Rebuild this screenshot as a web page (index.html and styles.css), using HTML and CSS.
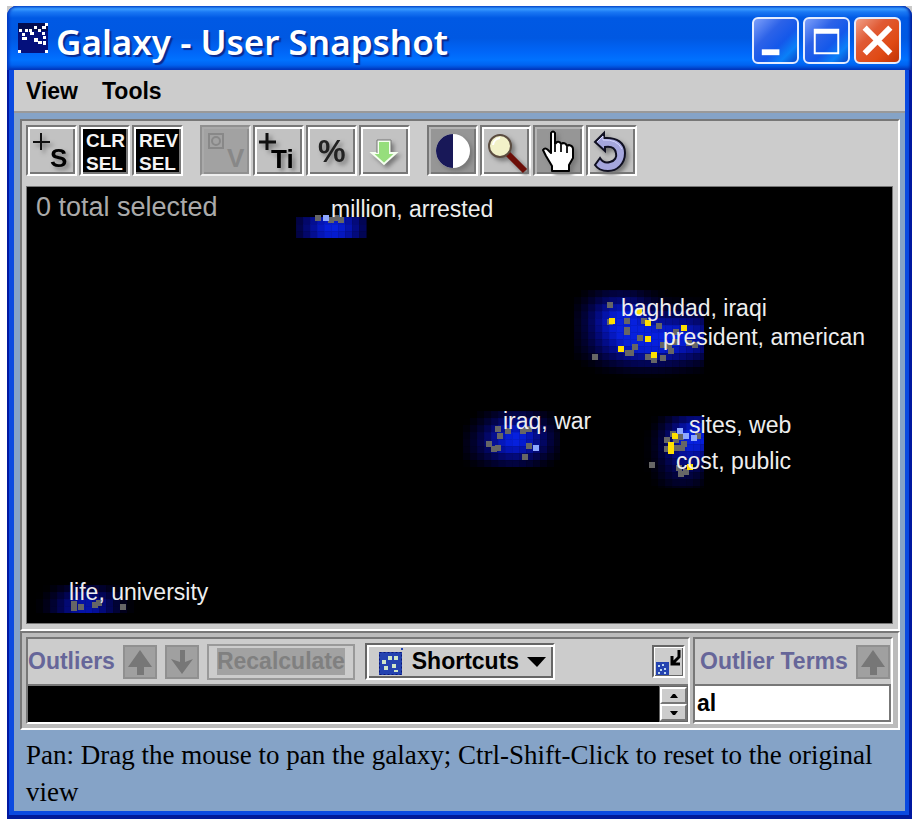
FILE: index.html
```html
<!DOCTYPE html>
<html lang="en">
<head>
<meta charset="utf-8">
<title>Galaxy - User Snapshot</title>
<link rel="stylesheet" href="styles.css">
</head>
<body>
<div class="backdrop">
<main class="window">
  <header class="titlebar">
    <svg class="app-icon" viewBox="0 0 30 30" aria-hidden="true">
      <rect width="30" height="30" fill="#04107c"/>
      <path d="M0 0h30v8H0z" fill="#020c50"/>
      <path d="M1 6h3v3H1zM7 6h3v3H7zM4 10h3v3H4zM11 6h3v3h-3zM4 14h5v3H4zM12 9h4v3h-4zM16 3h3v3h-3zM20 6h3v3h-3zM24 3h4v3h-4zM27 0h3v3h-3zM24 9h3v3h-3zM16 15h4v4h-4zM20 18h4v3h-4zM25 18h3v4h-3zM25 13h3v3h-3zM0 27h3v3H0zM27 27h3v3h-3z" fill="#fff"/>
    </svg>
    <h1 class="title">Galaxy - User Snapshot</h1>
    <div class="caption-buttons">
      <button class="caption" aria-label="Minimize"><svg viewBox="0 0 48 48"><path d="M10 33h18v6H10z" fill="#fff"/></svg></button>
      <button class="caption" aria-label="Maximize"><svg viewBox="0 0 48 48"><path d="M11 12h26v26H11zM13 17v19h22V17z" fill="#fff" fill-rule="evenodd"/></svg></button>
      <button class="caption close" aria-label="Close"><svg viewBox="0 0 48 48"><path d="M13 13l22 22M35 13L13 35" stroke="#fff" stroke-width="6" stroke-linecap="square"/></svg></button>
    </div>
  </header>

  <div class="client">
    <nav class="menubar">
      <button class="menu">View</button>
      <button class="menu">Tools</button>
    </nav>

    <div class="content">
      <section class="galaxy-panel">
        <div class="toolbar">
          <div class="group">
            <button class="tool" aria-label="Add to selection"><svg viewBox="0 0 51 51">
              <g class="shadow"><path d="M7 17h17M15 8v17" stroke="#111" stroke-width="2"/><text x="24" y="42" class="glyph">S</text></g></svg></button>
            <button class="tool solid" aria-label="Clear selection"><svg viewBox="0 0 51 51"><text x="7" y="22" class="caps">CLR</text><text x="7" y="45" class="caps">SEL</text></svg></button>
            <button class="tool solid" aria-label="Reverse selection"><svg viewBox="0 0 51 51"><text x="7" y="22" class="caps">REV</text><text x="7" y="45" class="caps">SEL</text></svg></button>
          </div>
          <div class="group">
            <button class="tool off" disabled aria-label="View"><svg viewBox="0 0 51 51">
              <path d="M9 9h14v14H9z" fill="none" stroke="#888" stroke-width="2"/><circle cx="16" cy="16" r="4" fill="none" stroke="#888" stroke-width="2"/><text x="27" y="42" class="glyph faded">V</text></svg></button>
            <button class="tool" aria-label="Add title"><svg viewBox="0 0 51 51"><g class="shadow"><path d="M6 17h17M14 8v17" stroke="#111" stroke-width="3"/><text x="18" y="43" class="glyph">Ti</text></g></svg></button>
            <button class="tool" aria-label="Percent"><svg viewBox="0 0 51 51"><text x="12" y="37" class="percent shadow">%</text></svg></button>
            <button class="tool" aria-label="Load"><svg viewBox="0 0 51 51"><path class="shadow" d="M19 16h12v12h6L25 39 13 28h6z" fill="#96de7c" stroke="#f5fff0" stroke-width="2"/><path d="M18 28V15h14v12" fill="none" stroke="#777"/></svg></button>
          </div>
          <div class="group">
            <button class="tool down" aria-label="Contrast"><svg viewBox="0 0 51 51"><g class="shadow"><circle cx="26" cy="26" r="17" fill="#fff"/><path d="M26 9a17 17 0 0 0 0 34z" fill="#181858"/></g></svg></button>
            <button class="tool" aria-label="Zoom"><svg viewBox="0 0 51 51"><g class="shadow"><path d="M28 29l17 17" stroke="#6c0e08" stroke-width="6"/><circle cx="20" cy="21" r="11" fill="#f2f1c8" stroke="#5b4c40" stroke-width="2"/><path d="M13 20a8 8 0 0 1 7-7" fill="none" stroke="#fff" stroke-width="2"/></g></svg></button>
            <button class="tool down" aria-label="Pan"><svg viewBox="0 0 51 51"><path class="shadow" d="M18 8q2-3 4 0v11l2-2q3-1 4 2l2-1q3 0 4 3l2-1q4 1 4 4v9l-4 7v6H19v-5l-6-10-3-6q2-3 5 0l3 3z" fill="#fff" stroke="#000" stroke-width="2" stroke-linejoin="round"/><path d="M22 19v8M28 19v8M34 21v7" stroke="#222" stroke-width="2" fill="none"/></svg></button>
            <button class="tool" aria-label="Undo"><svg viewBox="0 0 51 51"><path class="shadow" d="M9 17L18 8v5C31 12 39 18 39 28C39 39 31 46 22 46C16 46 11 43 9 40L14 33C17 38 21 38 24 37C29 36 31 32 30 28C29 23 25 21 19 22v4z" fill="#a5a6dd" stroke="#101022" stroke-width="2"/><path d="M11 17l6-6v4q14-1 19 9" fill="none" stroke="#d4d5ff"/></svg></button>
          </div>
        </div>
        <svg class="galaxy" viewBox="0 0 865 436" role="img" aria-label="Galaxy of document clusters">
          <rect width="865" height="436"/>
          <g id="halos"></g>
          <g id="points"></g>
          <g class="labels">
            <text x="304" y="30">million, arrested</text>
            <text x="594" y="129">baghdad, iraqi</text>
            <text x="636" y="158">president, american</text>
            <text x="476" y="242">iraq, war</text>
            <text x="662" y="246">sites, web</text>
            <text x="649" y="282">cost, public</text>
            <text x="42" y="413">life, university</text>
          </g>
          <text class="count" x="9" y="29">0 total selected</text>
        </svg>
      </section>

      <section class="outliers">
        <div class="pane pane-list">
          <div class="pane-head">
            <span class="caption-text">Outliers</span>
            <button class="arrow" disabled aria-label="Previous outlier"><svg viewBox="0 0 34 34"><path d="M17 5l12 17h-8v8h-7v-8H5z" fill="#777"/></svg></button>
            <button class="arrow" disabled aria-label="Next outlier"><svg viewBox="0 0 34 34"><path d="M15 5h5v12l8-3-11 15L6 14l9 3z" fill="#777"/></svg></button>
            <button class="recalc" disabled><span>Recalculate</span></button>
            <button class="shortcuts">
              <svg class="grid-icon" viewBox="0 0 25 27"><path d="M0 4h23v23H0z" fill="#2443b0"/><path d="M.5 4.500h22v22H.5z" fill="none" stroke="#0a1878" stroke-dasharray="2 2"/><path d="M22 0h2v2h-2z" fill="#2443b0"/><path d="M9 8h4v4H9zM15 8h4v4h-4zM3 12h4v4H3zM13 16h4v4h-4zM5 18h4v4H5zM15 22h4v2h-4z" fill="#cfe6c8"/></svg>
              Shortcuts
              <svg class="chevron" viewBox="0 0 19 10"><path d="M0 0h19l-9 10z"/></svg>
            </button>
            <button class="export" aria-label="Send to galaxy"><svg viewBox="0 0 33 33"><path d="M4 17h13v13H4z" fill="#2443b0"/><path d="M6 20h2v2H6zM10 19h2v2h-2zM8 24h2v2H8zM12 23h2v2h-2zM6 27h2v2H6zM12 27h2v2h-2z" fill="#bcd6f0"/><path d="M27 5v7l-6 6M20 11v8h8" fill="none" stroke="#000" stroke-width="3"/></svg></button>
          </div>
          <div class="list-row">
            <div class="list" role="listbox" aria-label="Outliers"></div>
            <div class="spinner">
              <button aria-label="Scroll up"><svg viewBox="0 0 8 4"><path d="M0 4l3-4h2l3 4z"/></svg></button>
              <button aria-label="Scroll down"><svg viewBox="0 0 8 4"><path d="M0 0l3 4h2l3-4z"/></svg></button>
            </div>
          </div>
        </div>
        <div class="pane pane-terms">
          <div class="pane-head">
            <label class="caption-text" for="terms">Outlier Terms</label>
            <button class="arrow" disabled aria-label="Previous term"><svg viewBox="0 0 34 34"><path d="M17 5l12 17h-8v8h-7v-8H5z" fill="#777"/></svg></button>
          </div>
          <input id="terms" class="terms" type="text" value="al">
        </div>
      </section>

      <p class="status">Pan: Drag the mouse to pan the galaxy; Ctrl-Shift-Click to reset to the original view</p>
    </div>
  </div>
</main>
</div>
<script src="galaxy.js"></script>
</body>
</html>
```
FILE: styles.css
```css
* { box-sizing: border-box; }
body {
  margin: 0;
  padding: 6px 6px 5px 7px;
  background: #fff;
  font-family: "Liberation Sans", Arial, sans-serif;
  color: #000;
}
button { font: inherit; color: inherit; margin: 0; padding: 0; border: 0; border-radius: 0; background: none; }
svg { display: block; }

.backdrop { background: linear-gradient(#c9c9c9 30px, #fff 30px); }
.window {
  padding: 0 7px 8px;
  border-radius: 10px 10px 0 0;
  background: #0a4ae0;
  box-shadow: inset 2px 0 #0018a0, inset -3px 0 #0018a0, inset 0 -4px #001a98;
}
.titlebar {
  display: flex;
  align-items: center;
  height: 64px;
  margin: 0 -7px;
  padding: 0 11px;
  border-radius: 10px 10px 0 0;
  background: linear-gradient(#0a58d8 0, #3a9bff 3px, #1a78f4 6px, #0059e4 12px, #0058e2 32px, #0066f8 46px, #0072ff 54px, #0062f0 59px, #003ec4 63px);
  box-shadow: inset 3px 0 3px -1px #0438c0, inset -3px 0 3px -1px #001c98;
}
.app-icon { width: 30px; height: 30px; }
.title {
  flex: 1;
  margin: 0 0 0 8px;
  padding-top: 8px;
  color: #fff;
  font: 600 35px/44px "Noto Sans", sans-serif;
  white-space: nowrap;
  text-shadow: 2px 2px 1px #0a2a90;
}
.caption-buttons { display: flex; gap: 4px; padding-top: 4px; }
.caption {
  width: 47px;
  height: 47px;
  border: 2px solid #e4ecff;
  border-radius: 6px;
  background: linear-gradient(135deg, #7ea0fa 0, #2c62e8 35%, #1458ea 60%, #0a80f8 80%, #0a48c8 100%);
}
.caption svg { margin: -2px; width: 47px; height: 47px; }
.close { background: linear-gradient(135deg, #f0a088 0, #e05a34 35%, #e04a14 70%, #c03408 100%); }

.client { background: #85a3c7; }
.menubar {
  display: flex;
  gap: 24px;
  height: 43px;
  padding: 2px 12px 0;
  background: #ccc;
  border-bottom: 2px solid #999;
}
.menu { font-size: 23px; font-weight: bold; }
.content { padding: 6px 5px 0 6px; }

.galaxy-panel {
  padding: 4px 6px 6px 5px;
  border: 2px solid;
  border-color: #777 #fff #fff #777;
  background: #ccc;
}
.toolbar { display: flex; flex-wrap: wrap; gap: 17px; margin: 0 0 11px -1px; }
.group { display: flex; gap: 2px; }
.tool {
  width: 51px;
  height: 51px;
  border: 2px solid;
  border-color: #777 #fff #fff #777;
  background: #c2c2c2;
  box-shadow: inset 2px 2px #fff, inset -2px -2px #777;
}
.tool svg { width: 51px; height: 51px; margin: -2px; overflow: hidden; }
.solid { background: #000; }
.down { background: #969696; box-shadow: inset 2px 2px #b4b4b4, inset -2px -2px #777; }
.off { background: #a2a2a2; border-color: #909090 #eee #eee #909090; box-shadow: inset 2px 2px #aaa, inset -2px -2px #909090; }
.shadow { filter: drop-shadow(3px 3px 2px #777); }
.glyph { font: bold 26px "Liberation Sans", sans-serif; fill: #000; }
.faded { fill: #888; }
.caps { font: bold 19px "Liberation Sans", sans-serif; fill: #f4f4f4; }
.percent { font: bold 31px "Liberation Sans", sans-serif; fill: #222; }

.galaxy { width: 100%; height: auto; outline: 1px solid #777; }
.labels { font: 23px "Liberation Sans", sans-serif; fill: #eee; }
.count { font: 27px "Liberation Sans", sans-serif; fill: #aaa; }

.outliers {
  display: flex;
  padding: 4px 5px 4px 4px;
  gap: 3px;
  border: 2px solid;
  border-color: #777 #fff #fff #777;
  background: #bbb;
}
.pane { border: 2px solid; border-color: #777 #fff #fff #777; background: #ccc; }
.pane-list { flex: 1; min-width: 0; }
.pane-terms { width: 200px; }
.pane-head { display: flex; align-items: center; height: 45px; }
.caption-text { color: #666699; font-size: 23px; font-weight: bold; white-space: nowrap; }
.arrow { width: 34px; height: 34px; margin-left: 8px; background: #a0a0a0; border: 2px solid #909090; }
.arrow svg { width: 34px; height: 34px; margin: -2px; }
.recalc {
  height: 36px;
  margin-left: 8px;
  padding: 0 8px;
  border: 2px solid #999;
  color: #808080;
  font-size: 23px;
  font-weight: bold;
}
.recalc span { display: block; line-height: 27px; background: #a2a2a2; }
.shortcuts {
  display: flex;
  align-items: center;
  gap: 8px;
  height: 37px;
  margin-left: 10px;
  padding: 0 7px 0 12px;
  border: 2px solid;
  border-color: #666 #fff #fff #666;
  box-shadow: inset 2px 2px #fff, inset -2px -2px #666;
  font-size: 23px;
  font-weight: bold;
}
.grid-icon { width: 25px; height: 27px; }
.chevron { width: 19px; height: 10px; }
.export {
  width: 33px;
  height: 33px;
  margin: 0 3px 0 auto;
  border: 2px solid;
  border-color: #666 #fff #fff #666;
  box-shadow: inset 1px 1px #fff, inset -1px -1px #666;
}
.export svg { width: 33px; height: 33px; margin: -2px; }
.list-row { display: flex; height: 38px; border-top: 2px solid #777; }
.list { flex: 1; background: #000; }
.spinner { display: flex; flex-direction: column; width: 29px; border: 1px solid #666; }
.spinner button {
  display: grid;
  place-items: center;
  flex: 1;
  border: 2px solid;
  border-color: #fff #777 #777 #fff;
}
.spinner svg { width: 8px; height: 4px; }
.pane-terms .caption-text { padding-left: 5px; }
.terms {
  display: block;
  width: 100%;
  height: 38px;
  margin: 0;
  padding: 0 2px;
  border: 2px solid #777;
  border-left: 0;
  background: #fff;
  font: bold 23px "Liberation Sans", sans-serif;
  color: #000;
}
.status {
  margin: 0;
  padding: 7px 20px 0 6px;
  font: 27px/37px "Liberation Serif", "Times New Roman", serif;
}
```
FILE: galaxy.js
```js
const NS = "http://www.w3.org/2000/svg";
const CELL = 7;

// Each halo: bounds, then light sources as [x, y, radiusX, radiusY, strength].
const halos = [
  { box: [269, 30, 340, 51], sources: [[305, 40, 28, 22, 1]] },
  { box: [547, 103, 677, 191], sources: [[592, 130, 27, 20, 0.9], [655, 148, 38, 20, 0.8], [610, 160, 38, 17, 0.6]] },
  { box: [436, 224, 533, 280], sources: [[489, 248, 26, 19, 0.8], [480, 260, 34, 17, 0.3]] },
  { box: [610, 229, 677, 301], sources: [[669, 248, 24, 18, 0.95], [655, 275, 22, 24, 0.4]] },
  { box: [9, 398, 115, 426], sources: [[58, 419, 26, 16, 0.8]] }
];

const points = {
  "#666": [
    [291, 31], [304, 33], [309, 31], [314, 33],
    [583, 118], [583, 135], [600, 134], [600, 143], [600, 145], [617, 134], [632, 139], [649, 145],
    [613, 151], [608, 160], [601, 166], [604, 166], [621, 170], [627, 173], [636, 171], [636, 158],
    [642, 159], [644, 164], [662, 156], [668, 158], [568, 170], [648, 155],
    [471, 242], [473, 249], [481, 244], [462, 257], [467, 262], [471, 261], [496, 244], [502, 242], [502, 259], [498, 270],
    [640, 253], [640, 262], [649, 253], [654, 250], [657, 257], [650, 261], [655, 261], [671, 249],
    [625, 278], [652, 281], [654, 287], [659, 285], [646, 247],
    [47, 417], [47, 421], [54, 420], [68, 418], [72, 416], [96, 420]
  ],
  "#ffe000": [
    [585, 134], [621, 136], [657, 141], [621, 152], [594, 162], [627, 168], [612, 125],
    [648, 249], [644, 258], [644, 264], [663, 280]
  ],
  "#8ea8ff": [[299, 31], [509, 261], [653, 244], [659, 249], [667, 251]]
};

function addRect(parent, x, y, w, h, fill) {
  const r = document.createElementNS(NS, "rect");
  for (const [k, v] of Object.entries({ x, y, width: w, height: h, fill })) r.setAttribute(k, v);
  parent.appendChild(r);
}

const haloLayer = document.getElementById("halos");
for (const { box: [x0, y0, x1, y1], sources } of halos) {
  for (let y = y0; y < y1; y += CELL) {
    for (let x = x0; x < x1; x += CELL) {
      let v = 0;
      for (const [sx, sy, rx, ry, s] of sources) {
        const d = ((x + 3 - sx) / rx) ** 2 + ((y + 3 - sy) / ry) ** 2;
        v += s * Math.exp(-d * 0.7);
      }
      v = Math.min(1, v) - 0.06;
      if (v <= 0) continue;
      const w = Math.min(CELL, x1 - x), h = Math.min(CELL, y1 - y);
      const rgb = k => `rgb(${Math.round(6 * v * k)},${Math.round(36 * v * v * k)},${Math.round(236 * v * k)})`;
      addRect(haloLayer, x, y, w, h, rgb(0.92));
      addRect(haloLayer, x + 1, y + 1, w - 1, h - 1, rgb(1));
    }
  }
}

const pointLayer = document.getElementById("points");
for (const [fill, list] of Object.entries(points)) {
  for (const [x, y] of list) addRect(pointLayer, x - 3, y - 3, 6, 6, fill);
}
```
